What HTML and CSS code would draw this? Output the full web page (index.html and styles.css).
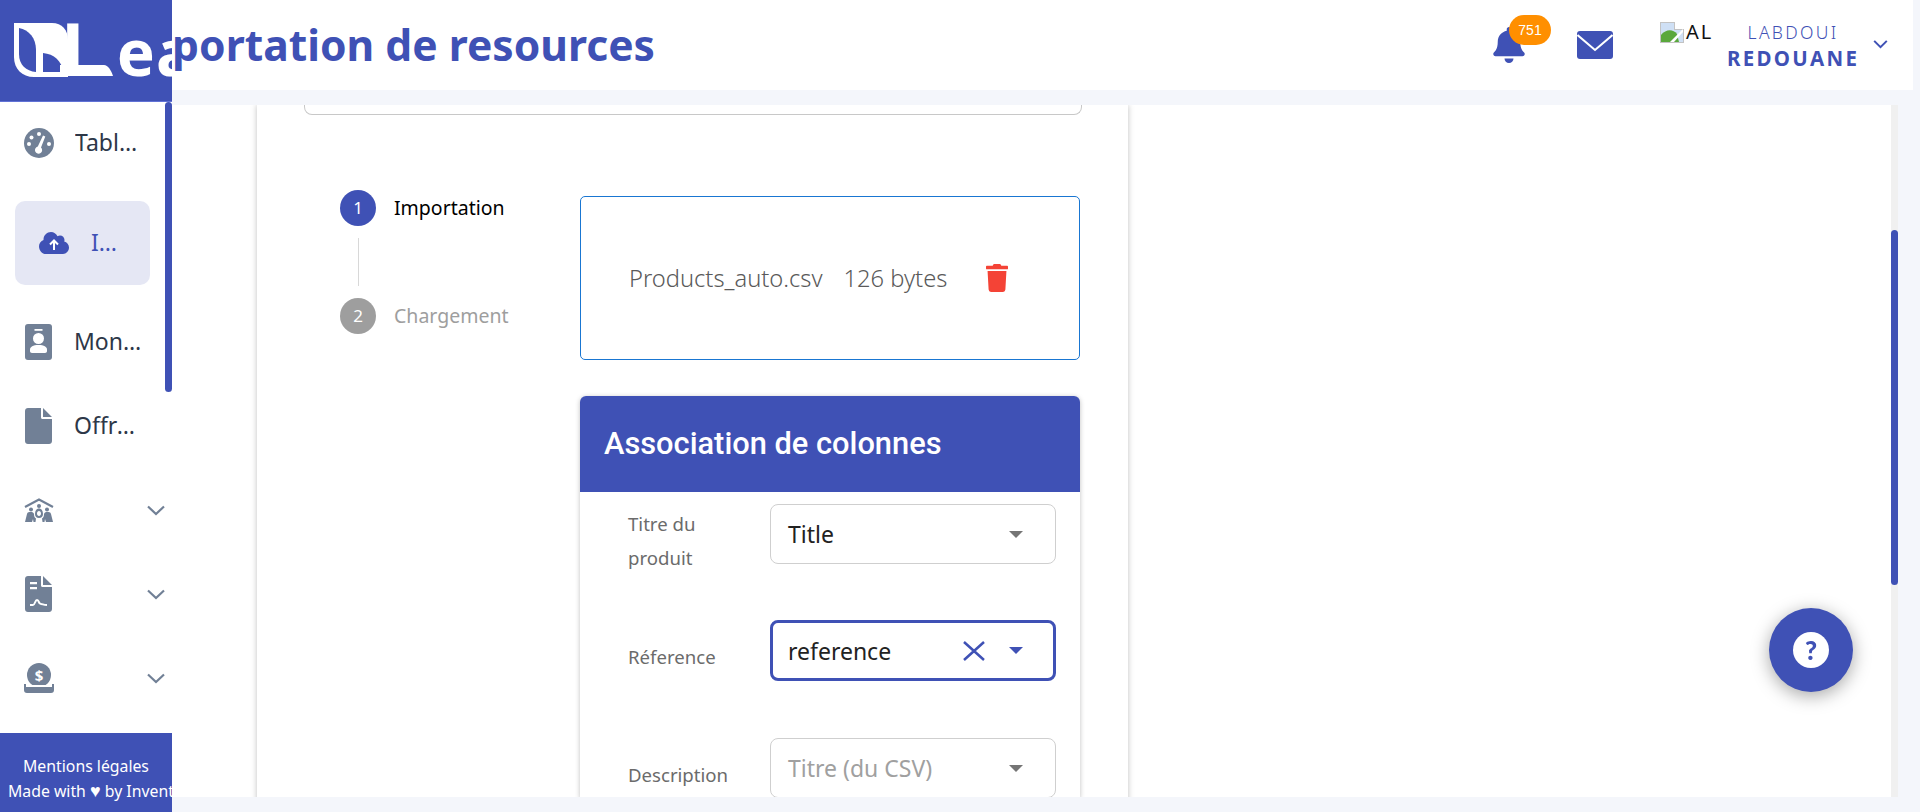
FILE: index.html
```html
<!DOCTYPE html>
<html lang="fr">
	<head>
		<meta charset="utf-8" />
		<title>Importation de resources</title>
		<link rel="stylesheet" href="styles.css">
	</head>
	<body>
		<div class="app">
			<aside class="sidebar">
				<div class="logo">
					<svg class="logo-mark" viewBox="0 0 99 54" width="99" height="54">
						<path fill="#fff" d="M0 0H38C48 0 54 7 54 17V54H20C8 54 0 46 0 34Z"/>
						<path fill="#3f51b5" d="M5 5C15 7 22 15 22 27V49C12 48 5 42 5 31Z"/>
						<path fill="#3f51b5" d="M29 30C40 31 48 38 49 49H29Z"/>
						<path fill="#fff" d="M46 42H90C94 42 97 47 99 53H46Z"/>
					</svg>
					<span class="logo-text">L<span class="logo-rest">ea</span></span>
				</div>
				<nav class="nav">
					<a class="nav-item nav-first">
						<svg class="nav-icon" viewBox="0 0 30 30" width="30" height="30">
							<circle cx="15" cy="15" r="15" fill="#718096"/>
							<circle cx="15" cy="6" r="2" fill="#fff"/>
							<circle cx="7.5" cy="9.5" r="2" fill="#fff"/>
							<circle cx="5" cy="16" r="2" fill="#fff"/>
							<circle cx="25" cy="16" r="2" fill="#fff"/>
							<path fill="#fff" d="M19 7.5L21.3 8.6L17 19.5A3.6 3.6 0 1 1 13.8 18.6Z"/>
						</svg>
						<span class="nav-label label-tableau">Tableau de bord</span>
					</a>
					<a class="nav-item nav-active">
						<svg class="nav-icon" viewBox="0 0 30 22" width="30" height="22">
							<path fill="#3f51b5" d="M25.2 9.6C25.4 9 25.5 8.5 25.5 7.9C25.5 5.4 23.5 3.4 21 3.4C20 3.4 19.2 3.7 18.5 4.2C17.2 1.7 14.8 0 12 0C8 0 4.5 3.3 4.5 7.4V7.9C1.9 8.8 0 11.3 0 14.2C0 18.4 3 22 7 22H24C27.3 22 30 19 30 15.5C30 12.7 28 10.3 25.2 9.6Z"/>
							<path fill="none" stroke="#fff" stroke-width="2" d="M15 18V9M11 12.5L15 8.5L19 12.5"/>
						</svg>
						<span class="nav-label label-import">Importation</span>
					</a>
					<a class="nav-item">
						<svg class="nav-icon" viewBox="0 0 27 36" width="27" height="36">
							<rect width="27" height="36" rx="3" fill="#718096"/>
							<rect x="9.5" y="5" width="8" height="1.8" fill="#fff"/>
							<circle cx="13.5" cy="14.5" r="5.5" fill="#fff"/>
							<path fill="#fff" d="M5 27V25.5C5 23 8 21 13.5 21C19 21 22 23 22 25.5V27C22 28.2 21.2 29 20 29H7C5.8 29 5 28.2 5 27Z"/>
						</svg>
						<span class="nav-label label-mon">Mon compte</span>
					</a>
					<a class="nav-item">
						<svg class="nav-icon" viewBox="0 0 27 36" width="27" height="36">
							<path fill="#718096" d="M3 0H16V9.5C16 10.3 16.7 11 17.5 11H27V33C27 34.7 25.7 36 24 36H3C1.3 36 0 34.7 0 33V3C0 1.3 1.3 0 3 0ZM18 0L27 9H18Z"/>
						</svg>
						<span class="nav-label label-offres">Offres</span>
					</a>
					<a class="nav-item nav-group">
						<svg class="nav-icon" viewBox="0 0 30 24" width="30" height="24">
							<path fill="none" stroke="#718096" stroke-width="2.2" d="M1 9L15 1.5L29 9"/>
							<circle cx="15" cy="8" r="2" fill="#718096"/>
							<path fill="#718096" fill-rule="evenodd" d="M11 16C11 12.5 12.5 10.5 15 10.5C17.5 10.5 19 12.5 19 16C19 18.5 17.5 20 15 20C12.5 20 11 18.5 11 16ZM13 15.5C13 17 13.8 18 15 18C16.2 18 17 17 17 15.5C17 14 16.2 13 15 13C13.8 13 13 14 13 15.5Z"/>
							<circle cx="7" cy="11.5" r="2" fill="#718096"/>
							<circle cx="23" cy="11.5" r="2" fill="#718096"/>
							<path fill="#718096" d="M1 24L3 16C3.5 14 5 14 7 14C8.5 14 9.5 14.5 10 16C10 18 10.5 19.5 12 20.5L11.5 24H9.5L9 21L8 24ZM29 24L27 16C26.5 14 25 14 23 14C21.5 14 20.5 14.5 20 16C20 18 19.5 19.5 18 20.5L18.5 24H20.5L21 21L22 24Z"/>
						</svg>
						<svg class="chevron" viewBox="0 0 18 11" width="18" height="11"><path fill="none" stroke="#718096" stroke-width="2.2" d="M1 1.5L9 9L17 1.5"/></svg>
					</a>
					<a class="nav-item nav-group">
						<svg class="nav-icon nav-icon-narrow" viewBox="0 0 27 36" width="27" height="36">
							<path fill="#718096" d="M3 0H16V9.5C16 10.3 16.7 11 17.5 11H27V33C27 34.7 25.7 36 24 36H3C1.3 36 0 34.7 0 33V3C0 1.3 1.3 0 3 0ZM18 0L27 9H18Z"/>
							<path fill="#fff" d="M5 6H12V8.3H5ZM5 11H12V13.3H5Z"/>
							<path fill="none" stroke="#fff" stroke-width="2" d="M5 29H8C10 29 10 24 12 24C14.5 24 13 28 16 28C18 28 18 29 22 29"/>
						</svg>
						<svg class="chevron" viewBox="0 0 18 11" width="18" height="11"><path fill="none" stroke="#718096" stroke-width="2.2" d="M1 1.5L9 9L17 1.5"/></svg>
					</a>
					<a class="nav-item nav-group">
						<svg class="nav-icon" viewBox="0 0 30 30" width="30" height="30">
							<circle cx="15" cy="12" r="12" fill="#718096"/>
							<text x="15" y="17.5" text-anchor="middle" class="coin-sign">$</text>
							<path fill="#718096" d="M0 21H2V24H28V21H30V27C30 29 29 30 27 30H3C1 30 0 29 0 27Z"/>
							<rect x="4" y="22" width="22" height="2" fill="#fff"/>
						</svg>
						<svg class="chevron" viewBox="0 0 18 11" width="18" height="11"><path fill="none" stroke="#718096" stroke-width="2.2" d="M1 1.5L9 9L17 1.5"/></svg>
					</a>
					<div class="nav-thumb"></div>
				</nav>
				<footer class="side-footer">
					<div class="footer-legal">Mentions légales</div>
					<div class="footer-made">Made with <span class="heart">♥</span> by Inventis</div>
				</footer>
			</aside>

			<div class="right">
				<header class="topbar">
					<h1 class="page-title">Importation de resources</h1>
					<div class="top-actions">
						<div class="bell">
							<svg viewBox="0 0 448 512" width="32" height="36">
								<path fill="#3f51b5" d="M224 512c35.32 0 63.97-28.65 63.97-64H160.03c0 35.35 28.65 64 63.97 64zm215.39-149.71c-19.32-20.76-55.47-51.99-55.47-154.29 0-77.7-54.48-139.9-127.94-155.16V32c0-17.67-14.32-32-31.98-32s-31.98 14.33-31.98 32v20.84C118.56 68.1 64.08 130.3 64.08 208c0 102.3-36.15 133.53-55.47 154.29-6 6.45-8.66 14.16-8.61 21.71.11 16.4 12.98 32 32.1 32h383.8c19.12 0 32-15.6 32.1-32 .05-7.55-2.61-15.27-8.61-21.71z"/>
							</svg>
							<span class="badge">751</span>
						</div>
						<svg class="mail" viewBox="0 0 36 28" width="36" height="28">
							<rect width="36" height="28" rx="3" fill="#3f51b5"/>
							<path fill="none" stroke="#fff" stroke-width="2" d="M0.5 4L18 19L35.5 4"/>
						</svg>
						<div class="avatar">
							<svg viewBox="0 0 24 23" width="24" height="23">
								<path fill="#c3c3c3" d="M0 2H15L24 9V23H0Z"/>
								<path fill="#fff" d="M15 0L24 7V9H15Z"/>
								<path fill="#cfe0f5" d="M1 3H14V10H23V22H1Z"/>
								<path fill="#5aa83c" d="M1 22V15C6 9 13 9 17 14L19 22Z"/>
								<path fill="#fff" d="M10 22L23 9V12L14 22Z"/>
							</svg>
							<span class="avatar-alt">AL</span>
						</div>
						<div class="user-name">
							<div class="first-name">LABDOUI</div>
							<div class="last-name">REDOUANE</div>
						</div>
						<svg class="user-chevron" viewBox="0 0 16 10" width="15" height="9"><path fill="none" stroke="#3f51b5" stroke-width="2.2" d="M1 1L8 8L15 1"/></svg>
					</div>
				</header>

				<div class="main">
					<div class="scroll-area">
						<section class="panel">
							<div class="filters-box"></div>
							<div class="import-row">
								<div class="stepper">
									<div class="step">
										<span class="step-num">1</span>
										<span class="step-label">Importation</span>
									</div>
									<div class="step-line"></div>
									<div class="step step-off">
										<span class="step-num">2</span>
										<span class="step-label">Chargement</span>
									</div>
								</div>
								<div class="step-body">
									<div class="file-box">
										<span class="file-name">Products_auto.csv</span>
										<span class="file-size">126 bytes</span>
										<svg class="trash" viewBox="0 0 448 512" width="22" height="28" preserveAspectRatio="none">
											<path fill="#f44336" d="M432 32H312l-9.4-18.7A24 24 0 0 0 281.1 0H166.8a23.72 23.72 0 0 0-21.4 13.3L136 32H16A16 16 0 0 0 0 48v32a16 16 0 0 0 16 16h416a16 16 0 0 0 16-16V48a16 16 0 0 0-16-16zM53.2 467a48 48 0 0 0 47.9 45h245.8a48 48 0 0 0 47.9-45L416 128H32z"/>
										</svg>
									</div>
									<div class="assoc">
										<div class="assoc-head">Association de colonnes</div>
										<div class="assoc-body">
											<div class="field">
												<label class="field-label">Titre du produit</label>
												<div class="select">
													<span class="select-value">Title</span>
													<span class="arrow"></span>
												</div>
											</div>
											<div class="field field-focus">
												<label class="field-label">Réference</label>
												<div class="select select-focus">
													<span class="select-value">reference</span>
													<svg class="clear" viewBox="0 0 22 20" width="22" height="20"><path fill="none" stroke="#3f51b5" stroke-width="2.5" d="M1 1L21 19M21 1L1 19"/></svg>
													<span class="arrow"></span>
												</div>
											</div>
											<div class="field">
												<label class="field-label">Description</label>
												<div class="select">
													<span class="select-value select-empty">Titre (du CSV)</span>
													<span class="arrow"></span>
												</div>
											</div>
										</div>
									</div>
								</div>
							</div>
						</section>
					</div>
					<div class="track"><div class="thumb"></div></div>
				</div>
			</div>
		</div>
		<div class="help"><span class="help-mark">?</span></div>
	</body>
</html>
```

FILE: styles.css
```css
* {
	box-sizing: border-box;
}
html, body {
	margin: 0;
	height: 100%;
	overflow: hidden;
}
body {
	background: #f4f6fb;
	font-family: "Noto Sans", "Lato", sans-serif;
	color: #2d3748;
}
.app {
	display: flex;
	height: 812px;
}

/* sidebar */
.sidebar {
	width: 172px;
	flex: none;
	display: flex;
	flex-direction: column;
	background: #fff;
}
.logo {
	height: 102px;
	flex: none;
	background: #3f51b5;
	border-bottom: 1px solid #6172d6;
	overflow: hidden;
	display: flex;
	align-items: flex-start;
	padding: 23px 0 0 14px;
}
.logo-mark {
	flex: none;
}
.logo-text {
	font: 700 73px/53px "Noto Sans", sans-serif;
	color: #fff;
	letter-spacing: 15px;
	margin: -2px 0 0 -52px;
}
.logo-rest {
	font-size: 64px;
	letter-spacing: 1px;
}
.nav {
	position: relative;
	flex: 1;
	overflow: hidden;
}
.nav-item {
	display: flex;
	align-items: center;
	height: 84px;
	padding-left: 25px;
}
.nav-first {
	height: 82px;
	padding-left: 24px;
}
.nav-active {
	margin: 17px 22px 15px 15px;
	padding-left: 24px;
	background: #e5e7f4;
	border-radius: 10px;
	color: #3f51b5;
}
.nav-group {
	padding-left: 24px;
}
.nav-icon {
	flex: none;
}
.nav-icon-narrow {
	margin: 0 2px 0 1px;
}
.nav-label {
	margin: -3px 0 0 22px;
	font-size: 23px;
	white-space: nowrap;
	overflow: hidden;
	text-overflow: ellipsis;
}
.nav-first .nav-label {
	margin-left: 21px;
}
.nav-active .nav-label {
	margin-left: 22px;
}
.label-tableau {
	width: 68px;
}
.label-import {
	width: 30px;
}
.label-mon {
	width: 68px;
}
.label-offres {
	width: 62px;
}
.chevron {
	margin-left: 93px;
}
.coin-sign {
	font: 700 15px "Noto Sans", sans-serif;
	fill: #fff;
}
.nav-thumb {
	position: absolute;
	top: 0;
	right: 0;
	width: 7px;
	height: 290px;
	background: #3f51b5;
	border-radius: 4px;
}
.side-footer {
	height: 79px;
	flex: none;
	background: #3f51b5;
	color: #fff;
	font-size: 15.8px;
	line-height: 25px;
	padding-top: 21px;
	overflow: hidden;
	white-space: nowrap;
}
.footer-legal {
	text-align: center;
}
.footer-made {
	padding-left: 8px;
}
.heart {
	font-size: 18px;
	line-height: 20px;
}

/* top bar */
.right {
	flex: 1;
	min-width: 0;
	display: flex;
	flex-direction: column;
}
.topbar {
	height: 90px;
	flex: none;
	margin-right: 7px;
	background: #fff;
	display: flex;
	align-items: center;
	overflow: hidden;
	padding-right: 25px;
}
.page-title {
	margin: 0 0 2px -58px;
	font-size: 42.6px;
	font-weight: 700;
	color: #3f51b5;
	white-space: nowrap;
}
.top-actions {
	margin-left: auto;
	display: flex;
	align-items: center;
}
.bell {
	position: relative;
	width: 32px;
	height: 36px;
	margin-right: 52px;
}
.badge {
	position: absolute;
	left: 16px;
	top: -12px;
	width: 42px;
	height: 30px;
	border-radius: 15px;
	background: #ff8f00;
	color: #fff;
	font: 14px/30px "Liberation Sans", sans-serif;
	text-align: center;
}
.avatar {
	display: flex;
	align-items: center;
	margin-left: 47px;
	width: 67px;
	margin-bottom: 27px;
	overflow: hidden;
}
.avatar-alt {
	font-size: 20px;
	color: #111;
	letter-spacing: 2px;
	margin-left: 2px;
}
.user-name {
	width: 132px;
	text-align: center;
	color: #3f51b5;
}
.first-name {
	font-size: 17.5px;
	font-weight: 300;
	letter-spacing: 2.3px;
	line-height: 24px;
	margin-bottom: 2px;
}
.last-name {
	font-size: 20.5px;
	font-weight: 700;
	letter-spacing: 2.3px;
	line-height: 24px;
}
.user-chevron {
	margin-left: 14px;
	margin-bottom: 2px;
}

/* main */
.main {
	margin-top: 15px;
	height: 692px;
	margin-right: 22px;
	display: flex;
}
.scroll-area {
	flex: 1;
	background: #fff;
	overflow: hidden;
	padding-left: 85px;
}
.track {
	width: 7px;
	flex: none;
	background: #f0f0f0;
	padding-top: 125px;
}
.thumb {
	height: 355px;
	background: #3f51b5;
	border-radius: 4px;
}
.panel {
	width: 871px;
	height: 1000px;
	background: #fff;
	box-shadow: 0 0 6px rgba(0,0,0,.25);
}
.filters-box {
	width: 778px;
	height: 10px;
	margin-left: 47px;
	border: 1px solid #c8c8c8;
	border-top: none;
	border-radius: 0 0 8px 8px;
}
.import-row {
	display: flex;
	margin-top: 75px;
	padding-left: 83px;
}

/* stepper */
.stepper {
	width: 240px;
	flex: none;
}
.step {
	display: flex;
	align-items: center;
}
.step-num {
	width: 36px;
	height: 36px;
	border-radius: 50%;
	background: #3f51b5;
	color: #fff;
	font-size: 17px;
	line-height: 36px;
	text-align: center;
}
.step-label {
	margin: -2px 0 0 18px;
	font-size: 19.5px;
	color: #000;
}
.step-off .step-num {
	background: #9e9e9e;
}
.step-off .step-label {
	color: #9e9e9e;
}
.step-line {
	width: 1px;
	height: 48px;
	margin: 12px 0 12px 18px;
	background: #d8d8d8;
}

/* file + columns */
.step-body {
	width: 500px;
	flex: none;
	margin-top: 6px;
}
.file-box {
	height: 164px;
	border: 1px solid #1976d2;
	border-radius: 5px;
	display: flex;
	align-items: center;
	padding-left: 48px;
	color: #5a5a5a;
	font-size: 23.7px;
	font-weight: 300;
}
.file-size {
	margin-left: 21px;
}
.trash {
	margin-left: 39px;
}
.assoc {
	margin-top: 36px;
	border-radius: 6px 6px 0 0;
	box-shadow: 0 1px 5px rgba(0,0,0,.25);
}
.assoc-head {
	height: 96px;
	padding-left: 24px;
	background: #3f51b5;
	border-radius: 6px 6px 0 0;
	color: #fff;
	font: 500 30.8px/96px "Roboto", sans-serif;
}
.assoc-body {
	padding: 12px 24px 0 48px;
}
.field {
	display: flex;
	align-items: center;
	height: 60px;
	margin-bottom: 56px;
}
.field-focus {
	height: 61px;
	margin-bottom: 57px;
}
.field-label {
	width: 142px;
	flex: none;
	margin-top: 13px;
	padding-right: 40px;
	font-size: 18.6px;
	line-height: 34px;
	color: #6b6b6b;
}
.select {
	width: 286px;
	height: 60px;
	flex: none;
	display: flex;
	align-items: center;
	padding: 0 32px 0 17px;
	border: 1px solid #cfcfcf;
	border-radius: 8px;
	color: #222;
	font-size: 23px;
}
.select-focus {
	height: 61px;
	border: 3px solid #3f51b5;
	padding-left: 15px;
	padding-right: 30px;
}
.select-value {
	flex: 1;
	white-space: nowrap;
}
.select-empty {
	color: #a0a0a0;
}
.clear {
	margin-right: 24px;
}
.arrow {
	width: 0;
	height: 0;
	border-left: 7px solid transparent;
	border-right: 7px solid transparent;
	border-top: 7px solid #757575;
}
.select-focus .arrow {
	border-top-color: #3f51b5;
}

/* help button */
.help {
	position: fixed;
	right: 67px;
	bottom: 120px;
	width: 84px;
	height: 84px;
	border-radius: 50%;
	background: #3f51b5;
	box-shadow: 0 4px 18px rgba(0,0,0,.35);
	display: flex;
	align-items: center;
	justify-content: center;
}
.help-mark {
	width: 36px;
	height: 36px;
	border-radius: 50%;
	background: #fff;
	color: #3f51b5;
	font: 900 26px/36px "Lato", sans-serif;
	text-align: center;
}
```
